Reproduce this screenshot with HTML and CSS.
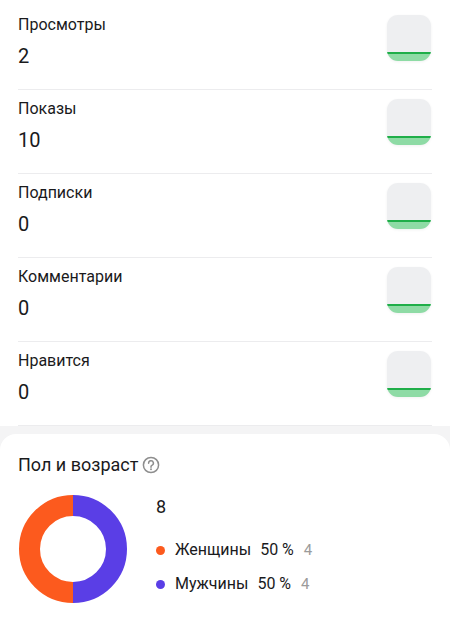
FILE: index.html
```html
<!DOCTYPE html>
<html lang="ru">
<head>
<meta charset="utf-8">
<link rel="stylesheet" href="styles.css">
</head>
<body>
<div class="list">
  <div class="row">
    <div class="info"><div class="label">Просмотры</div><div class="value">2</div></div>
    <div class="spark"><div class="band"></div></div>
  </div>
  <div class="row">
    <div class="info"><div class="label">Показы</div><div class="value">10</div></div>
    <div class="spark"><div class="band"></div></div>
  </div>
  <div class="row">
    <div class="info"><div class="label">Подписки</div><div class="value">0</div></div>
    <div class="spark"><div class="band"></div></div>
  </div>
  <div class="row">
    <div class="info"><div class="label">Комментарии</div><div class="value">0</div></div>
    <div class="spark"><div class="band"></div></div>
  </div>
  <div class="row">
    <div class="info"><div class="label">Нравится</div><div class="value">0</div></div>
    <div class="spark"><div class="band"></div></div>
  </div>
</div>
<div class="card">
  <div class="title">Пол и возраст
    <svg class="help" width="18" height="18" viewBox="0 0 18 18">
      <circle cx="9" cy="9" r="7.6" fill="none" stroke="#8e8e8e" stroke-width="1.5"/>
      <path d="M6.6 7.2a2.4 2.4 0 1 1 3.3 2.2c-.6.3-.9.7-.9 1.3v.6" fill="none" stroke="#8e8e8e" stroke-width="1.5" stroke-linecap="round"/>
      <circle cx="9" cy="13.2" r="0.95" fill="#8e8e8e"/>
    </svg>
  </div>
  <div class="chart">
    <svg class="donut" width="108" height="108" viewBox="0 0 108 108">
      <path d="M54 10.5A43.5 43.5 0 0 0 54 97.5" fill="none" stroke="#fc5a1e" stroke-width="21"/>
      <path d="M54 10.5A43.5 43.5 0 0 1 54 97.5" fill="none" stroke="#5a3ee6" stroke-width="21"/>
    </svg>
    <div class="legend">
      <div class="total">8</div>
      <div class="item"><span class="dot dot-f"></span><span class="name">Женщины</span><span class="pct">50 %</span><span class="cnt">4</span></div>
      <div class="item"><span class="dot dot-m"></span><span class="name">Мужчины</span><span class="pct">50 %</span><span class="cnt">4</span></div>
    </div>
  </div>
</div>
</body>
</html>
```

FILE: styles.css
```css
html, body {
  margin: 0;
  padding: 0;
}
body {
  width: 450px;
  height: 626px;
  overflow: hidden;
  background: #f4f4f5;
  font-family: Roboto, "Liberation Sans", sans-serif;
  color: #1a1a1c;
  display: flex;
  flex-direction: column;
}
.list {
  background: #fff;
  padding-top: 6px;
}
.row {
  margin: 0 18px;
  height: 74px;
  border-bottom: 1px solid #ececee;
  display: flex;
  justify-content: space-between;
  align-items: flex-start;
  padding-top: 9px;
}
.label {
  font-size: 16px;
  line-height: 20px;
  height: 20px;
}
.value {
  margin-top: 9px;
  font-size: 20px;
  line-height: 24px;
}
.spark {
  width: 44px;
  height: 46px;
  margin-right: 1px;
  border-radius: 11px;
  background: #eeeff1;
  overflow: hidden;
  display: flex;
  flex-direction: column;
  justify-content: flex-end;
  box-shadow: 0 1px 3px rgba(0,0,0,0.06);
}
.band {
  height: 7px;
  border-top: 2px solid #1fae49;
  background: #8edba5;
}
.card {
  margin-top: 8px;
  background: #fff;
  border-radius: 16px 16px 0 0;
  padding: 20px 18px 0;
  flex: 1;
}
.title {
  font-size: 18px;
  line-height: 22px;
  display: flex;
  align-items: center;
  gap: 4px;
}
.help {
  display: block;
}
.chart {
  display: flex;
  align-items: flex-start;
  margin-top: 19px;
  gap: 29px;
  padding-left: 1px;
}
.donut {
  display: block;
}
.legend {
  padding-top: 1px;
}
.total {
  font-size: 18px;
  line-height: 22px;
  margin-bottom: 22px;
}
.item {
  display: flex;
  align-items: center;
  font-size: 16px;
  line-height: 20px;
  margin-bottom: 14px;
}
.dot {
  width: 9px;
  height: 9px;
  border-radius: 50%;
  margin-right: 10px;
}
.dot-f { background: #fc5a1e; }
.dot-m { background: #5a3ee6; }
.name { margin-right: 9px; }
.pct { margin-right: 10px; }
.cnt { color: #9b9b9b; font-size: 15px; }
```
